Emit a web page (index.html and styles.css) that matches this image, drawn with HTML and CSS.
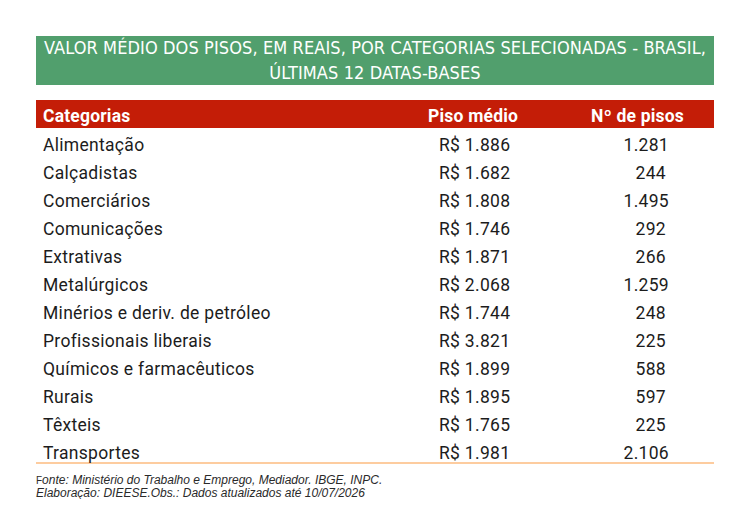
FILE: index.html
```html
<!DOCTYPE html>
<html lang="pt-BR">
<head>
<meta charset="utf-8">
<title>Valor médio dos pisos</title>
<link rel="stylesheet" href="styles.css">
</head>
<body>
<div class="page">
  <div class="title">VALOR MÉDIO DOS PISOS, EM REAIS, POR CATEGORIAS SELECIONADAS - BRASIL,<br>ÚLTIMAS 12 DATAS-BASES</div>
  <div class="table">
    <div class="row head">
      <div class="c1">Categorias</div>
      <div class="c2">Piso médio</div>
      <div class="c3">Nº de pisos</div>
    </div>
    <div class="body">
      <div class="row"><div class="c1">Alimentação</div><div class="c2">R$ 1.886</div><div class="c3">1.281</div></div>
      <div class="row"><div class="c1">Calçadistas</div><div class="c2">R$ 1.682</div><div class="c3 n3">244</div></div>
      <div class="row"><div class="c1">Comerciários</div><div class="c2">R$ 1.808</div><div class="c3">1.495</div></div>
      <div class="row"><div class="c1">Comunicações</div><div class="c2">R$ 1.746</div><div class="c3 n3">292</div></div>
      <div class="row"><div class="c1">Extrativas</div><div class="c2">R$ 1.871</div><div class="c3 n3">266</div></div>
      <div class="row"><div class="c1">Metalúrgicos</div><div class="c2">R$ 2.068</div><div class="c3">1.259</div></div>
      <div class="row"><div class="c1">Minérios e deriv. de petróleo</div><div class="c2">R$ 1.744</div><div class="c3 n3">248</div></div>
      <div class="row"><div class="c1">Profissionais liberais</div><div class="c2">R$ 3.821</div><div class="c3 n3">225</div></div>
      <div class="row"><div class="c1">Químicos e farmacêuticos</div><div class="c2">R$ 1.899</div><div class="c3 n3">588</div></div>
      <div class="row"><div class="c1">Rurais</div><div class="c2">R$ 1.895</div><div class="c3 n3">597</div></div>
      <div class="row"><div class="c1">Têxteis</div><div class="c2">R$ 1.765</div><div class="c3 n3">225</div></div>
      <div class="row"><div class="c1">Transportes</div><div class="c2">R$ 1.981</div><div class="c3">2.106</div></div>
    </div>
  </div>
  <div class="note">
    <div><span class="cap">F</span>onte: Ministério do Trabalho e Emprego, Mediador. IBGE, INPC.</div>
    <div>Elaboração: DIEESE.Obs.: Dados atualizados até 10/07/2026</div>
  </div>
</div>
</body>
</html>
```

FILE: styles.css
```css
html, body {
  margin: 0;
  padding: 0;
  background: #ffffff;
}

.page {
  width: 678px;
  padding: 36px 0 0 36px;
}

.title {
  background: #519f6d;
  color: #ffffff;
  height: 49px;
  font-family: "DejaVu Sans Condensed", "Liberation Sans Narrow", "Liberation Sans", sans-serif;
  font-size: 18px;
  line-height: 24.5px;
  text-align: center;
  letter-spacing: 0.1px;
}

.table {
  margin-top: 15px;
  font-family: Roboto, "Liberation Sans", sans-serif;
  color: #1c1c1c;
}

.row {
  display: grid;
  grid-template-columns: 384px 120px 174px;
  height: 28px;
  box-sizing: border-box;
  padding-top: 6px;
  font-size: 17.5px;
  line-height: 22px;
  letter-spacing: 0.3px;
}

.row .c1 {
  padding-left: 7px;
}

.row .c2 {
  padding-left: 19px;
}

.row .c3 {
  text-align: right;
  padding-right: 45px;
}

.row .c3.n3 {
  padding-right: 48px;
}

.head {
  background: #c41d07;
  color: #ffffff;
  font-weight: 700;
  padding-top: 5px;
  line-height: 23px;
  letter-spacing: 0.2px;
}

.head .c2 {
  padding-left: 8px;
}

.head .c3 {
  padding-right: 30px;
}

.body {
  border-bottom: 2px solid #fdcc9f;
}

.body .row:last-child {
  height: 26px;
}

.note {
  margin-top: 10px;
  font-family: "Liberation Sans", Arial, sans-serif;
  font-style: italic;
  font-size: 12px;
  line-height: 12px;
  color: #2a2a2a;
}

.note .cap {
  font-style: normal;
  font-size: 10px;
}
```
